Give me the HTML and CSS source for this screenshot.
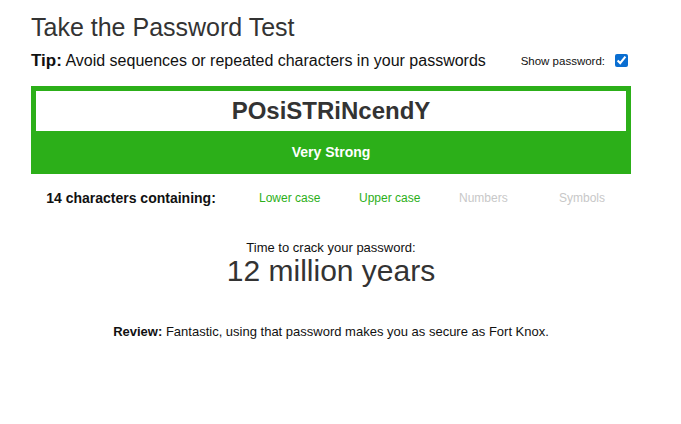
FILE: index.html
```html
<!DOCTYPE html>
<html>
<head>
<meta charset="utf-8">
<link rel="stylesheet" href="styles.css">
</head>
<body>
<div class="page">
  <h1 class="title">Take the Password Test</h1>
  <div class="tip-row">
    <p class="tip"><b class="tip-key">Tip:</b> Avoid sequences or repeated characters in your passwords</p>
    <label class="show">Show password: <input type="checkbox" class="check" checked></label>
  </div>
  <div class="meter">
    <div class="field">POsiSTRiNcendY</div>
    <div class="strength">Very Strong</div>
  </div>
  <div class="contains">
    <div class="count">14 characters containing:</div>
    <div class="kind on">Lower case</div>
    <div class="kind on">Upper case</div>
    <div class="kind off">Numbers</div>
    <div class="kind off">Symbols</div>
  </div>
  <div class="crack">
    <div class="crack-label">Time to crack your password:</div>
    <div class="crack-time">12 million years</div>
  </div>
  <p class="review"><b>Review:</b> Fantastic, using that password makes you as secure as Fort Knox.</p>
</div>
</body>
</html>
```
FILE: styles.css
```css
html, body {
  margin: 0;
  padding: 0;
  background: #fff;
}
body {
  font-family: "Liberation Sans", Arial, sans-serif;
  color: #111;
}
.page {
  width: 600px;
  margin-left: 31px;
}
.title {
  margin: 0;
  padding-top: 13px;
  font-size: 25px;
  font-weight: normal;
  color: #333;
  line-height: 29px;
}
.tip-row {
  display: flex;
  align-items: center;
  justify-content: space-between;
  margin-top: 7px;
  height: 24px;
}
.tip {
  margin: 0;
  font-size: 16px;
  color: #111;
}
.tip-key {
  font-size: 17px;
}
.show {
  display: flex;
  align-items: center;
  font-size: 11.5px;
  color: #111;
  margin-right: 3px;
}
.check {
  width: 13px;
  height: 13px;
  margin: 0 0 2px 10px;
  accent-color: #0a6ed1;
}
.meter {
  margin-top: 13px;
  background: #2caf19;
  padding: 5px 5px 0 5px;
  height: 83px;
}
.field {
  background: #fff;
  height: 40px;
  line-height: 40px;
  text-align: center;
  font-size: 24px;
  font-weight: bold;
  color: #333;
}
.strength {
  height: 43px;
  line-height: 43px;
  text-align: center;
  color: #fff;
  font-weight: bold;
  font-size: 14px;
}
.contains {
  display: flex;
  align-items: center;
  height: 48px;
}
.count {
  width: 200px;
  text-align: center;
  font-weight: bold;
  font-size: 14px;
  color: #111;
}
.kind {
  width: 100px;
  padding-left: 28px;
  box-sizing: border-box;
  font-size: 12px;
}
.kind.on { color: #2caf19; }
.kind.off { color: #c8c8c8; }
.crack {
  margin-top: 18px;
  text-align: center;
}
.crack-label {
  font-size: 13px;
  line-height: 15px;
  color: #111;
}
.crack-time {
  font-size: 30px;
  line-height: 32px;
  color: #333;
}
.review {
  margin: 37px 0 0 0;
  text-align: center;
  font-size: 13px;
  color: #111;
}
```
